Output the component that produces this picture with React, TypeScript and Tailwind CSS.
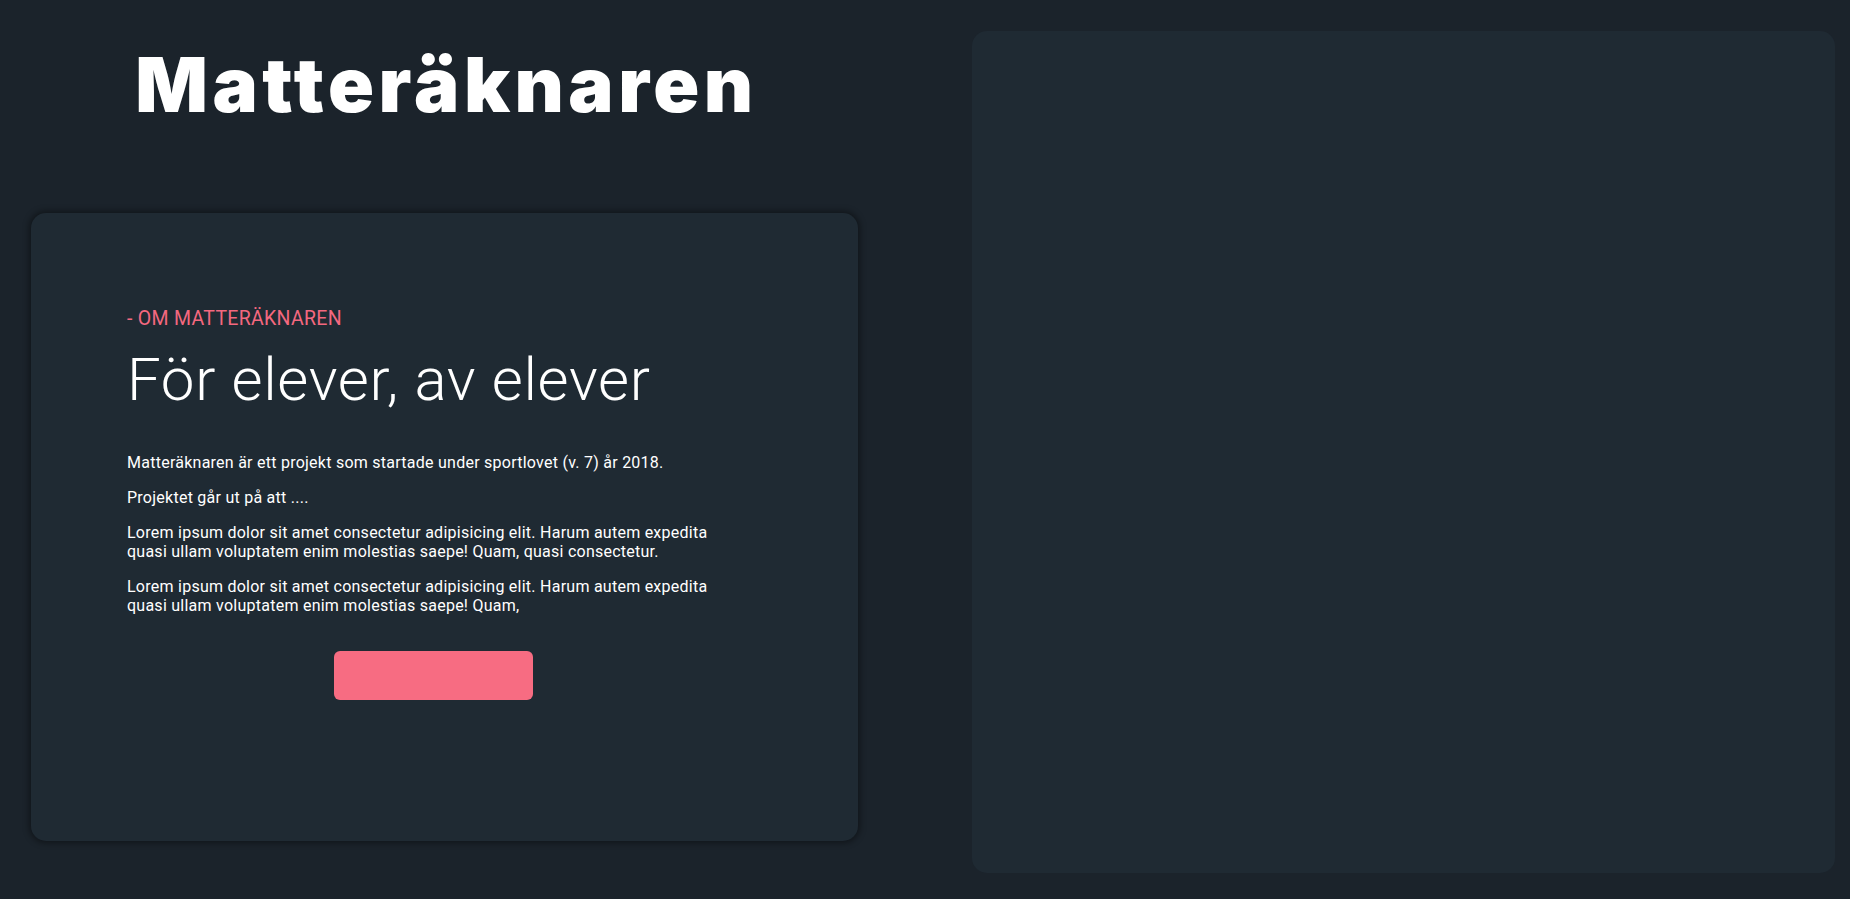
import React from 'react'

// Matteräknaren – startsida med "om"-kort och tom panel till höger
const font = { fontFamily: 'Roboto, "Noto Sans", sans-serif' }

function AboutCard() {
  return (
    <div className="mt-[90px] h-[628px] rounded-[15px] bg-[#1f2a33] pl-[96px] pr-[118px] pt-[94px] shadow-[0_0_6px_2px_rgba(0,0,0,0.4)]">
      <p className="text-[19.5px] leading-[24px] tracking-[0.3px] text-[#f4687f]">- OM MATTERÄKNAREN</p>
      <h2 className="mt-[19px] text-[60px] font-light leading-[60px] tracking-[0.7px] text-white">För elever, av elever</h2>

      <div className="mt-[43px] text-[16px] leading-[19px] tracking-[0.25px] text-white">
        <p>Matteräknaren är ett projekt som startade under sportlovet (v. 7) år 2018.</p>
        <p className="mt-4">Projektet går ut på att ....</p>
        <p className="mt-4">
          Lorem ipsum dolor sit amet consectetur adipisicing elit. Harum autem expedita
          <br />
          quasi ullam voluptatem enim molestias saepe! Quam, quasi consectetur.
        </p>
        <p className="mt-4">
          Lorem ipsum dolor sit amet consectetur adipisicing elit. Harum autem expedita
          <br />
          quasi ullam voluptatem enim molestias saepe! Quam,
        </p>
      </div>

      {/* knappen har ingen text i originalet */}
      <div className="mt-[36px] flex justify-center">
        <button className="h-[49px] w-[199px] rounded-[6px] bg-[#f76c82]"></button>
      </div>
    </div>
  )
}

export default function App() {
  return (
    <div style={font} className="flex min-h-screen gap-[114px] bg-[#1b232b] pl-[31px] pr-[15px] pt-[31px]">
      <div className="flex w-[827px] flex-col">
        <h1 className="mt-[14px] pl-[4px] text-center font-['Inter',sans-serif] text-[76px] font-black leading-[78px] tracking-[4.5px] text-white">
          Matteräknaren
        </h1>
        <AboutCard />
      </div>

      <div className="h-[842px] flex-1 rounded-[15px] bg-[#1f2a33]"></div>
    </div>
  )
}
